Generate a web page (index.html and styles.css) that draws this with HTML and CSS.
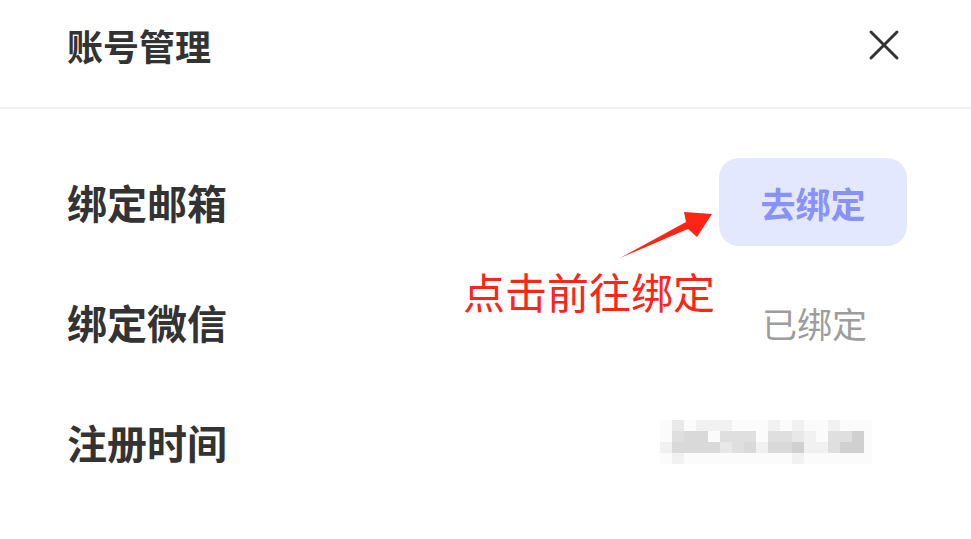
FILE: index.html
```html
<!DOCTYPE html>
<html lang="zh-CN">
<head>
    <meta charset="UTF-8">
    <meta name="viewport" content="width=device-width, initial-scale=1.0">
    <title>账号管理</title>
    <link rel="stylesheet" href="styles.css">
</head>
<body>
    <div class="modal">
        <div class="modal-header">
            <div class="modal-title">账号管理</div>
            <button class="close-btn" aria-label="关闭">
                <svg width="32" height="32" viewBox="0 0 32 32">
                    <path d="M3 3 L29 29 M29 3 L3 29" stroke="#333" stroke-width="3" stroke-linecap="round" fill="none"/>
                </svg>
            </button>
        </div>
        <div class="modal-body">
            <div class="row">
                <div class="label">绑定邮箱</div>
                <button class="bind-btn">去绑定</button>
            </div>
            <div class="row">
                <div class="label">绑定微信</div>
                <div class="value">已绑定</div>
            </div>
            <div class="row">
                <div class="label">注册时间</div>
                <div class="value">
                    <div class="mosaic">
                        <span class="s0"></span><span class="s2"></span><span class="s0"></span><span class="s1"></span><span class="s1"></span><span class="s1"></span><span class="s0"></span><span class="s0"></span><span class="s0"></span><span class="s1"></span><span class="s0"></span><span class="s1"></span><span class="s0"></span><span class="s0"></span><span class="s1"></span><span class="s0"></span><span class="s0"></span><span class="s0"></span>
                        <span class="s0"></span><span class="s3"></span><span class="s4"></span><span class="s4"></span><span class="s0"></span><span class="s3"></span><span class="s3"></span><span class="s3"></span><span class="s0"></span><span class="s3"></span><span class="s3"></span><span class="s2"></span><span class="s1"></span><span class="s0"></span><span class="s3"></span><span class="s3"></span><span class="s5"></span><span class="s0"></span>
                        <span class="s1"></span><span class="s4"></span><span class="s4"></span><span class="s4"></span><span class="s4"></span><span class="s2"></span><span class="s3"></span><span class="s4"></span><span class="s1"></span><span class="s4"></span><span class="s4"></span><span class="s5"></span><span class="s1"></span><span class="s1"></span><span class="s3"></span><span class="s5"></span><span class="s5"></span><span class="s0"></span>
                        <span class="s0"></span><span class="s1"></span><span class="s0"></span><span class="s0"></span><span class="s0"></span><span class="s0"></span><span class="s0"></span><span class="s0"></span><span class="s0"></span><span class="s0"></span><span class="s0"></span><span class="s1"></span><span class="s0"></span><span class="s0"></span><span class="s0"></span><span class="s0"></span><span class="s0"></span><span class="s0"></span>
                    </div>
                </div>
            </div>
        </div>

        <!-- 标注 -->
        <svg class="note-arrow" width="105" height="60" viewBox="615 205 105 60">
            <polygon points="620,258 688,229 697,237 712,214 684,212 686,222" fill="#fe2416"/>
        </svg>
        <div class="note-text">点击前往绑定</div>
    </div>
</body>
</html>
```

FILE: styles.css
```css
* {
    margin: 0;
    padding: 0;
    box-sizing: border-box;
}

body {
    font-family: "Noto Sans CJK SC", "Noto Sans", sans-serif;
    background-color: #fff;
    color: #333;
}

.modal {
    position: relative;
    width: 971px;
    height: 539px;
    overflow: hidden;
}

.modal-header {
    display: flex;
    align-items: center;
    justify-content: space-between;
    height: 109px;
    padding: 0 71px 17px 67px;
    border-bottom: 2px solid #f0f0f0;
}

.modal-title {
    font-size: 36px;
    font-weight: bold;
    line-height: 1;
}

.close-btn {
    border: none;
    background: none;
    display: flex;
    cursor: pointer;
}

.modal-body {
    padding: 33px 64px 0 67px;
}

.row {
    display: flex;
    align-items: center;
    justify-content: space-between;
    height: 120px;
}

.label {
    font-size: 40px;
    font-weight: bold;
    line-height: 1;
}

.bind-btn {
    width: 188px;
    height: 88px;
    border: none;
    border-radius: 20px;
    background-color: #e4e8fe;
    color: #8991fa;
    font-family: inherit;
    font-size: 35px;
    font-weight: bold;
    cursor: pointer;
}

.value {
    padding-right: 40px;
    font-size: 35px;
    color: #9d9d9d;
    line-height: 1;
}

.mosaic {
    display: grid;
    grid-template-columns: repeat(17, 12px) 8px;
    grid-auto-rows: 11px;
    margin-right: -5px;
}

.mosaic .s0 { background-color: #fbfbfb; }
.mosaic .s1 { background-color: #f1f1f1; }
.mosaic .s2 { background-color: #e8e8e8; }
.mosaic .s3 { background-color: #dfdfdf; }
.mosaic .s4 { background-color: #d9d9d9; }
.mosaic .s5 { background-color: #d0d0d0; }

.note-arrow {
    position: absolute;
    left: 615px;
    top: 205px;
}

.note-text {
    position: absolute;
    left: 463px;
    top: 266px;
    font-size: 42px;
    line-height: 1.2;
    color: #fe2416;
}
```
